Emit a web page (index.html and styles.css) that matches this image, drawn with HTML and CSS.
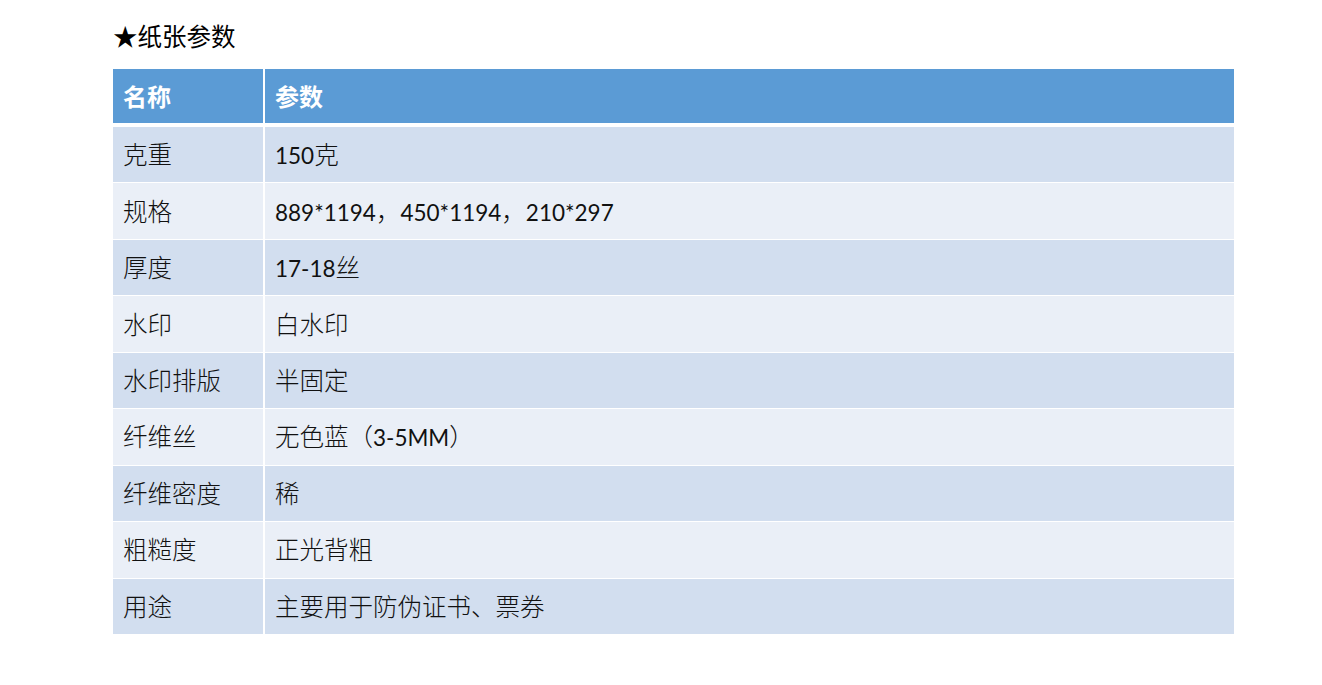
FILE: index.html
```html
<!DOCTYPE html>
<html lang="zh">
<head>
<meta charset="utf-8">
<title>纸张参数</title>
<link rel="stylesheet" href="styles.css">
</head>
<body>
<div class="page">
  <h1 class="title">★纸张参数</h1>
  <table class="params">
    <thead>
      <tr><th class="c1">名称</th><th>参数</th></tr>
    </thead>
    <tbody>
      <tr><td class="c1">克重</td><td><span class="num">150</span>克</td></tr>
      <tr><td class="c1">规格</td><td><span class="num">889*1194</span>，<span class="num">450*1194</span>，<span class="num">210*297</span></td></tr>
      <tr><td class="c1">厚度</td><td><span class="num">17-18</span>丝</td></tr>
      <tr><td class="c1">水印</td><td>白水印</td></tr>
      <tr><td class="c1">水印排版</td><td>半固定</td></tr>
      <tr><td class="c1">纤维丝</td><td>无色蓝（<span class="num">3-5MM</span>）</td></tr>
      <tr><td class="c1">纤维密度</td><td>稀</td></tr>
      <tr><td class="c1">粗糙度</td><td>正光背粗</td></tr>
      <tr><td class="c1">用途</td><td>主要用于防伪证书、票券</td></tr>
    </tbody>
  </table>
</div>
</body>
</html>
```
FILE: styles.css
```css
html, body {
  margin: 0;
  padding: 0;
  background: #ffffff;
}
.page {
  padding: 20px 88px 0 113px;
  font-family: "Noto Sans CJK SC", sans-serif;
  color: #111;
}
.title {
  margin: 0 0 18px 0;
  font-size: 24.5px;
  font-weight: normal;
  line-height: 31px;
  color: #000;
}
.params {
  width: 1121px;
  border-collapse: separate;
  border-spacing: 0;
  font-size: 24.5px;
}
.params th, .params td {
  text-align: left;
  padding: 0 0 2px 10px;
  vertical-align: middle;
  border-right: 2px solid #ffffff;
  border-bottom: 1px solid #ffffff;
}
.params th:last-child, .params td:last-child {
  border-right: none;
}
.params .c1 {
  width: 140px;
}
.params th {
  height: 52px;
  background: #5b9bd5;
  color: #ffffff;
  font-weight: bold;
  font-size: 24px;
  border-bottom: 4px solid #ffffff;
}
.params td {
  height: 53.45px;
  font-weight: 300;
}
.params tbody tr:nth-child(odd) td {
  background: #d2deef;
}
.params tbody tr:nth-child(even) td {
  background: #eaeff7;
}
.params tbody tr:last-child td {
  border-bottom: none;
}
.num {
  font-family: "Lato", "Open Sans", sans-serif;
  font-weight: normal;
  font-size: 22.5px;
}
```
